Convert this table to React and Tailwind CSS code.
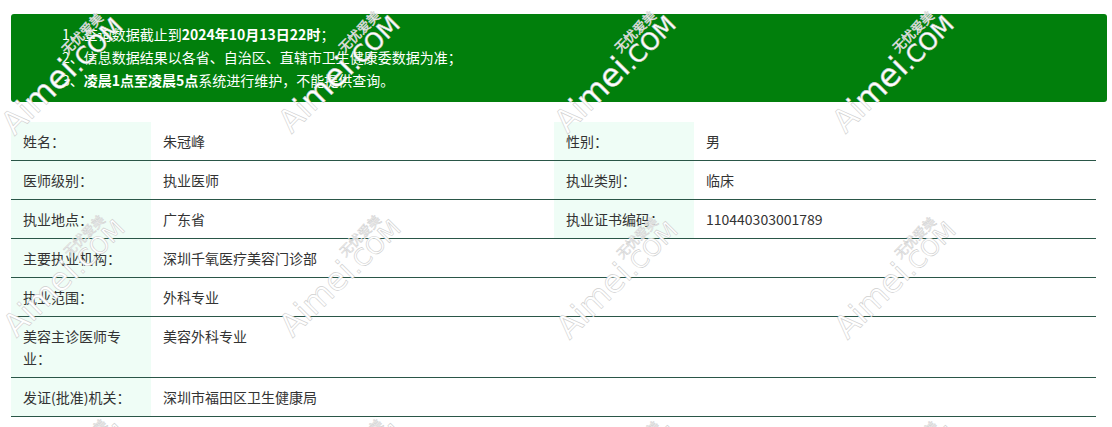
import React from "react";

const rows = [
  { l1: "姓名：", v1: "朱冠峰", l2: "性别：", v2: "男" },
  { l1: "医师级别：", v1: "执业医师", l2: "执业类别：", v2: "临床" },
  { l1: "执业地点：", v1: "广东省", l2: "执业证书编码：", v2: "110440303001789" },
  { l1: "主要执业机构：", v1: "深圳千氧医疗美容门诊部" },
  { l1: "执业范围：", v1: "外科专业" },
  { l1: "美容主诊医师专业：", v1: "美容外科专业" },
  { l1: "发证(批准)机关：", v1: "深圳市福田区卫生健康局" },
];

const marks = [
  [18, 140], [295, 138], [571, 138], [849, 138],
  [20, 342], [296, 342], [573, 344], [851, 344],
  [22, 546], [298, 546], [575, 548], [853, 548],
];

function Watermark({ x, y }) {
  return (
    <div className="absolute w-0 h-0" style={{ left: x, top: y }}>
      <div className="absolute bottom-0 left-0 origin-bottom-left -rotate-45 whitespace-nowrap flex items-end leading-none text-white [-webkit-text-stroke:0.6px_#cfcfcf] font-['DejaVu_Sans',sans-serif]">
        <span className="text-[32px]">Aimei</span>
        <span className="relative text-[24px]">
          .COM
          <span className="absolute left-[4px] bottom-[24px] text-[13px] font-['Noto_Sans_CJK_SC',sans-serif] [-webkit-text-stroke:0.5px_#cfcfcf]">
            无忧爱美
          </span>
        </span>
      </div>
    </div>
  );
}

export default function App() {
  return (
    <div className="relative h-[427px] w-[1112px] overflow-hidden bg-white font-['Noto_Sans_CJK_SC','Microsoft_YaHei',sans-serif] text-[14px] text-[#333]">
      <div className="px-[11px] pt-[14px] w-[1096px] box-content">
        <div className="rounded-[3px] bg-[#017f0c] pl-[51px] pt-[9px] pb-[10px] text-white leading-[23px]">
          <div>
            1、查询数据截止到<b className="font-bold">2024年10月13日22时</b>；
          </div>
          <div>2、信息数据结果以各省、自治区、直辖市卫生健康委数据为准；</div>
          <div>
            3、<b className="font-bold">凌晨1点至凌晨5点</b>系统进行维护，不能提供查询。
          </div>
        </div>

        <div className="mt-[20px] w-[1085px]">
          {rows.map((r, i) => (
            <div key={i} className="flex border-b border-[#2a5647] leading-[22px]">
              <div className="w-[140px] shrink-0 bg-[#effdf6] pl-[12px] pr-[12px] py-[8px]">{r.l1}</div>
              {r.l2 ? (
                <>
                  <div className="w-[403px] shrink-0 pl-[12px] py-[8px]">{r.v1}</div>
                  <div className="w-[140px] shrink-0 bg-[#effdf6] pl-[12px] py-[8px]">{r.l2}</div>
                  <div className="flex-1 pl-[12px] py-[8px]">{r.v2}</div>
                </>
              ) : (
                <div className="flex-1 pl-[12px] py-[8px]">{r.v1}</div>
              )}
            </div>
          ))}
        </div>
      </div>

      <div className="pointer-events-none absolute inset-0">
        {marks.map(([x, y], i) => (
          <Watermark key={i} x={x} y={y} />
        ))}
      </div>
    </div>
  );
}
